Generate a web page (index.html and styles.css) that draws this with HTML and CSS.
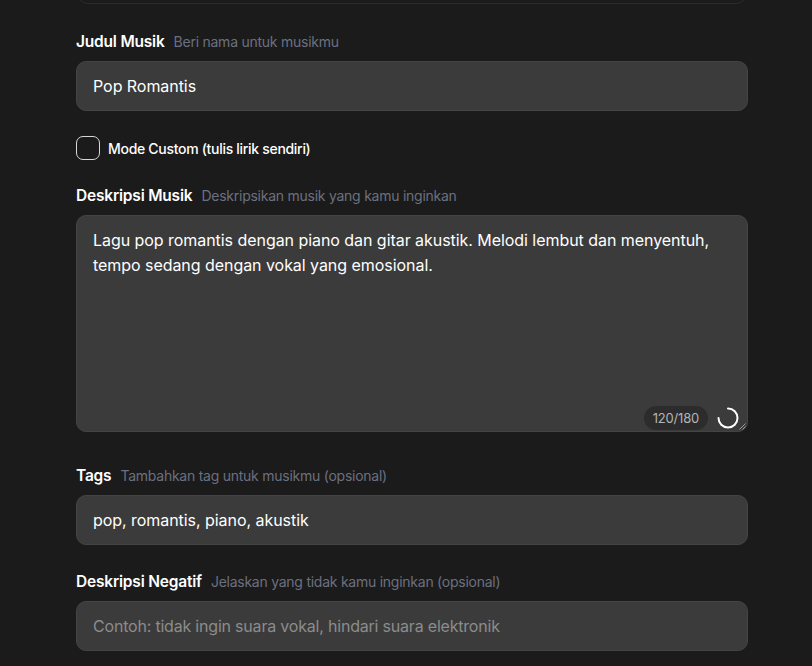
FILE: index.html
```html
<!DOCTYPE html>
<html lang="id">
<head>
    <meta charset="UTF-8">
    <meta name="viewport" content="width=device-width, initial-scale=1.0">
    <title>Buat Musik</title>
    <link rel="stylesheet" href="styles.css">
</head>
<body>
    <div class="form">
        <!-- previous panel, scrolled mostly out of view -->
        <div class="prev-panel"></div>

        <div class="field">
            <div class="label-row">
                <span class="label">Judul Musik</span>
                <span class="hint">Beri nama untuk musikmu</span>
            </div>
            <div class="input">Pop Romantis</div>
        </div>

        <label class="checkbox-row">
            <span class="checkbox"></span>
            <span class="checkbox-text">Mode Custom (tulis lirik sendiri)</span>
        </label>

        <div class="field field-desc">
            <div class="label-row">
                <span class="label">Deskripsi Musik</span>
                <span class="hint">Deskripsikan musik yang kamu inginkan</span>
            </div>
            <div class="textarea">
                <p>Lagu pop romantis dengan piano dan gitar akustik. Melodi lembut dan menyentuh, tempo sedang dengan vokal yang emosional.</p>
                <div class="counter">
                    <span class="count">120/180</span>
                    <svg class="ring" width="22" height="22" viewBox="0 0 22 22">
                        <path d="M11 1.5 A9.5 9.5 0 1 1 1.5 11" fill="none" stroke="#fff" stroke-width="2" stroke-linecap="round"/>
                    </svg>
                </div>
                <svg class="grip" width="7" height="7" viewBox="0 0 7 7">
                    <path d="M6.5 0.5 L0.5 6.5 M6.5 3.5 L3.5 6.5" stroke="#9a9a9a" stroke-width="1"/>
                </svg>
            </div>
        </div>

        <div class="field">
            <div class="label-row">
                <span class="label">Tags</span>
                <span class="hint">Tambahkan tag untuk musikmu (opsional)</span>
            </div>
            <div class="input">pop, romantis, piano, akustik</div>
        </div>

        <div class="field field-last">
            <div class="label-row">
                <span class="label">Deskripsi Negatif</span>
                <span class="hint">Jelaskan yang tidak kamu inginkan (opsional)</span>
            </div>
            <div class="input placeholder">Contoh: tidak ingin suara vokal, hindari suara elektronik</div>
        </div>
    </div>
</body>
</html>
```

FILE: styles.css
```css
* {
    margin: 0;
    padding: 0;
    box-sizing: border-box;
}

body {
    background-color: #1b1b1b;
    color: #fff;
    font-family: 'Inter', 'Noto Sans', sans-serif;
    overflow: hidden;
}

.form {
    width: 672px;
    margin-left: 76px;
    display: flex;
    flex-direction: column;
}

.prev-panel {
    height: 44px;
    margin-top: -40px;
    border: 1px solid #2b2b2b;
    border-radius: 12px;
    margin-bottom: 27px;
}

.field {
    display: flex;
    flex-direction: column;
    gap: 10px;
}

.label-row {
    height: 20px;
    display: flex;
    align-items: center;
    gap: 9px;
    white-space: nowrap;
}

.label {
    font-size: 15.5px;
    font-weight: 600;
    letter-spacing: -0.2px;
    color: #fff;
}

.hint {
    font-size: 14px;
    letter-spacing: -0.25px;
    color: #6b7080;
}

.input {
    height: 50px;
    background: #3b3b3b;
    border: 1px solid #444;
    border-radius: 10px;
    padding: 0 16px;
    display: flex;
    align-items: center;
    font-size: 16px;
    letter-spacing: -0.05px;
    color: #fff;
}

.input.placeholder {
    color: #8c8c8c;
    letter-spacing: -0.2px;
}

/* Checkbox */
.checkbox-row {
    display: flex;
    align-items: center;
    gap: 8px;
    height: 24px;
    margin: 25px 0 25px;
}

.checkbox {
    width: 24px;
    height: 24px;
    border: 1.5px solid #d8d8d8;
    border-radius: 7px;
}

.checkbox-text {
    font-size: 14px;
    font-weight: 500;
    letter-spacing: -0.3px;
}

/* Textarea */
.field-desc {
    margin-bottom: 33px;
}

.textarea {
    position: relative;
    height: 217px;
    background: #3b3b3b;
    border: 1px solid #444;
    border-radius: 10px;
    padding: 12px 16px;
}

.textarea p {
    font-size: 16px;
    line-height: 25px;
    letter-spacing: -0.05px;
    padding-right: 10px;
}

.counter {
    position: absolute;
    right: 8px;
    bottom: 1px;
    display: flex;
    align-items: center;
    gap: 9px;
}

.count {
    background: #2c2c2c;
    border-radius: 12px;
    padding: 0 9px;
    height: 24px;
    line-height: 24px;
    font-size: 13px;
    color: #b5b5b5;
    letter-spacing: -0.2px;
}

.ring {
    display: block;
    margin-bottom: 1px;
}

.grip {
    position: absolute;
    right: 1px;
    bottom: 1px;
}

.field-last {
    margin-top: 26px;
}
```
